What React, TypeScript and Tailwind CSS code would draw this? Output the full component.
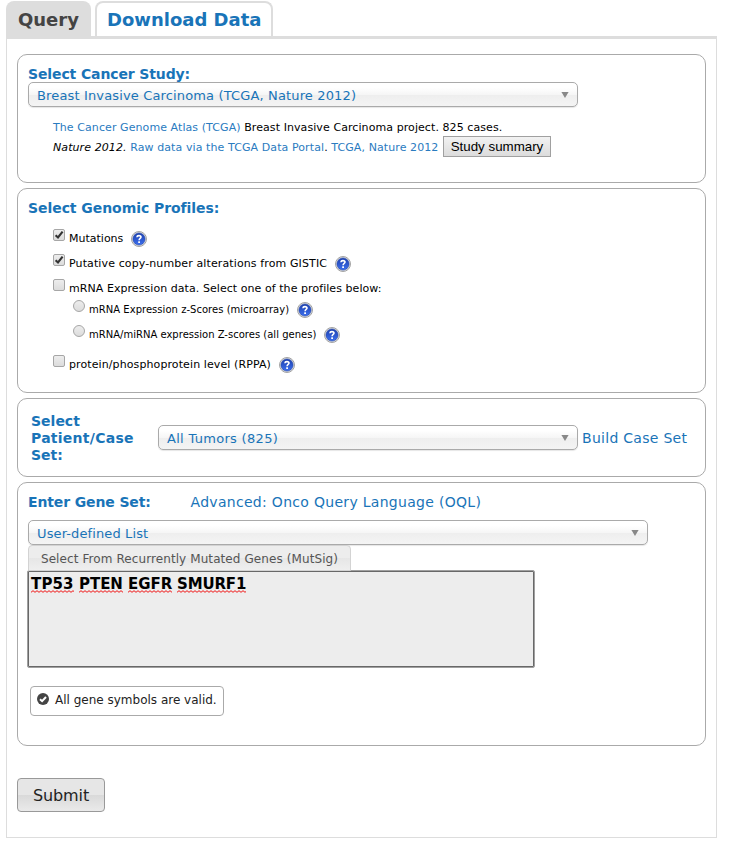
import type { ReactNode } from "react";

function Card({ className, children }: { className: string; children: ReactNode }) {
  return (
    <section className={`w-[689px] rounded-[10px] border border-[#aaa] ${className}`}>{children}</section>
  );
}

function Select({ label, className }: { label: string; className: string }) {
  return (
    <div
      className={`flex h-[25px] shrink-0 items-center justify-between rounded-[5px] border border-[#aaa] bg-[linear-gradient(#fff_20%,#f6f6f6_50%,#eee_52%,#f4f4f4_100%)] pr-[8px] pl-2 text-[13px] leading-[15px] text-[#1974b8] shadow-[0_1px_1px_rgba(0,0,0,0.1)] ${className}`}
    >
      <span className="pt-[2px]">{label}</span>
      <svg width="8" height="6" viewBox="0 0 8 6">
        <path d="M0.4 0h7.2L4 6z" fill="#888" />
      </svg>
    </div>
  );
}

function Help() {
  return (
    <svg width="16" height="16" viewBox="0 0 16 16" className="mt-[2px] ml-2 shrink-0">
      <defs>
        <linearGradient id="help-blue" x1="0" y1="0" x2="0" y2="1">
          <stop offset="0" stopColor="#1c3fae" />
          <stop offset="1" stopColor="#3d70ee" />
        </linearGradient>
      </defs>
      <circle cx="8" cy="8" r="7.5" fill="#e6e6e6" stroke="#a3a3a3" />
      <circle cx="8" cy="8" r="6.1" fill="url(#help-blue)" stroke="#2444a4" strokeWidth="0.6" />
      <path d="M5.9 6.2C6 4.2 10 4.1 10 6.1 10 7.5 8.1 7.4 8.1 9.3" fill="none" stroke="#fff" strokeWidth="1.6" />
      <rect x="7.2" y="10.3" width="1.8" height="1.7" fill="#fff" />
    </svg>
  );
}

function Box({ checked = false, round = false }: { checked?: boolean; round?: boolean }) {
  return (
    <span
      className={`h-3 w-3 shrink-0 border border-[#a6a6a6] bg-linear-to-b from-[#ededed] to-[#dcdcdc] ${round ? "rounded-full" : "rounded-[2px]"}`}
    >
      {checked && (
        <svg width="10" height="10" viewBox="0 0 10 10">
          <path d="M1.6 5.2 4 7.5 8.6 1.6" fill="none" stroke="#333" strokeWidth="2.1" />
        </svg>
      )}
    </span>
  );
}

interface Profile {
  label: string;
  row: string;
  text: string;
  checked?: boolean;
  round?: boolean;
  help?: boolean;
}

const profiles: Profile[] = [
  { label: "Mutations", row: "h-[25px] pl-[35px]", text: "text-[11px]", checked: true, help: true },
  { label: "Putative copy-number alterations from GISTIC", row: "h-[25px] pl-[35px]", text: "text-[11px] tracking-[0.115px]", checked: true, help: true },
  { label: "mRNA Expression data. Select one of the profiles below:", row: "h-[21px] pl-[35px]", text: "text-[11px] tracking-[0.06px]" },
  { label: "mRNA Expression z-Scores (microarray)", row: "h-[25px] pl-[55px]", text: "text-[10px] tracking-[0.03px]", round: true, help: true },
  { label: "mRNA/miRNA expression Z-scores (all genes)", row: "h-[30px] pl-[55px]", text: "text-[10px] tracking-[0.01px]", round: true, help: true },
  { label: "protein/phosphoprotein level (RPPA)", row: "h-[25px] pl-[35px]", text: "text-[11px] tracking-[0.1px]", help: true },
];

const genes = [
  { name: "TP53", className: "w-[48px] tracking-[0.15px]", wave: 43 },
  { name: "PTEN", className: "w-[49px] tracking-[-0.05px]", wave: 44 },
  { name: "EGFR", className: "w-[49px] tracking-[-0.05px]", wave: 44 },
  { name: "SMURF1", className: "w-[70px] tracking-[-0.15px]", wave: 69 },
];

/* Spell-check squiggle under a gene symbol */
function Squiggle({ width }: { width: number }) {
  return (
    <svg width={width} height="3" className="absolute top-[15px] left-0">
      <defs>
        <pattern id="squiggle" width="4" height="3" patternUnits="userSpaceOnUse">
          <path d="M-1 1.5 0 2.3 2 0.7 4 2.3 5 1.5" fill="none" stroke="#f00000" strokeWidth="0.9" />
        </pattern>
      </defs>
      <rect width={width} height="3" fill="url(#squiggle)" />
    </svg>
  );
}

export default function App() {
  return (
    <div className="h-[855px] w-[733px] bg-white pt-px pl-[6px] font-['DejaVu_Sans',sans-serif] whitespace-nowrap text-black">
      <nav className="flex h-[35px] gap-[4px] text-[18px] leading-[22px] font-bold">
        <div className="w-[85px] rounded-t-[8px] bg-[#ddd] pt-[8px] pl-3 text-[#444]">Query</div>
        <div className="w-[178px] rounded-t-[8px] border-2 border-b-0 border-[#ddd] pt-[6px] pl-[10px] text-[#1974b8]">
          Download Data
        </div>
      </nav>
      <main className="h-[802px] w-[711px] border border-t-[3px] border-[#ddd] pt-[15px] pl-[10px]">
        <Card className="h-[129px] pt-[11px] pl-[10px]">
          <h2 className="h-4 text-[14px] leading-4 font-bold tracking-[-0.12px] text-[#1974b8]">Select Cancer Study:</h2>
          <Select label="Breast Invasive Carcinoma (TCGA, Nature 2012)" className="w-[550px] tracking-[0.145px]" />
          <div className="pt-[11px] pl-[25px] text-[11px] leading-[20px] tracking-[0.08px]">
            <p>
              <span className="text-[#2a7bbf]">The Cancer Genome Atlas (TCGA)</span> Breast Invasive Carcinoma project. 825 cases.
            </p>
            <p className="flex h-5 items-start">
              <span className="w-[386px] tracking-[0.09px]">
                <i>Nature 2012.</i> <span className="text-[#2a7bbf]">Raw data via the TCGA Data Portal</span>.{" "}
                <span className="text-[#2a7bbf]">TCGA, Nature 2012</span>
              </span>
              <button className="-mt-[2px] ml-1 h-[21px] w-[108px] border border-[#a0a0a0] bg-linear-to-b from-[#f2f2f2] to-[#dcdcdc] font-['Liberation_Sans',sans-serif] text-[13.33px] leading-[19px] tracking-normal">
                Study summary
              </button>
            </p>
          </div>
        </Card>

        <Card className="mt-[5px] h-[205px] pt-[11px] pl-[10px]">
          <h2 className="h-[29px] text-[14px] leading-4 font-bold tracking-[-0.06px] text-[#1974b8]">
            Select Genomic Profiles:
          </h2>
          <div className="-ml-[10px]">
            {profiles.map((p) => (
              <div key={p.label} className={`flex items-start ${p.row}`}>
                <Box checked={p.checked} round={p.round} />
                <span className={`ml-1 pt-[3px] leading-[14px] ${p.text}`}>{p.label}</span>
                {p.help && <Help />}
              </div>
            ))}
          </div>
        </Card>

        <Card className="mt-[5px] flex h-[79px] items-center pl-[13px]">
          <h2 className="w-[127px] pt-[2px] text-[14px] leading-[17px] font-bold tracking-[0.26px] text-[#1974b8]">
            <span className="tracking-normal">Select</span>
            <br />
            Patient/Case
            <br />
            <span className="tracking-normal">Set:</span>
          </h2>
          <Select label="All Tumors (825)" className="w-[420px] tracking-[0.3px]" />
          <a className="ml-1 pt-[2px] text-[14px] tracking-[0.28px] text-[#1974b8]">Build Case Set</a>
        </Card>

        <Card className="mt-[5px] h-[264px] pt-[11px] pl-[10px]">
          <div className="flex h-[26px] text-[14px] leading-4 text-[#1974b8]">
            <h2 className="w-[162.5px] font-bold tracking-[-0.13px]">Enter Gene Set:</h2>
            <a className="tracking-[0.3px]">Advanced: Onco Query Language (OQL)</a>
          </div>
          <Select label="User-defined List" className="w-[620px] tracking-[0.12px]" />
          <button className="relative z-10 block h-[26px] w-[323px] rounded-t-[4px] border border-[#d3d3d3] bg-[linear-gradient(#ededed_50%,#e6e6e6_50%,#efefef)] pt-px text-[12px] leading-[24px] tracking-[0.09px] text-[#555]">
            Select From Recurrently Mutated Genes (MutSig)
          </button>
          <div className="-mt-px -ml-px flex h-[98px] w-[508px] rounded-[2px] border border-[#a0a0a0] bg-[#ededed] pt-[4px] pl-[3px] text-[15px] leading-[18px] font-bold shadow-[inset_0_0_0_1px_#686868]">
            {genes.map((g) => (
              <span key={g.name} className={`relative ${g.className}`}>
                {g.name}
                <Squiggle width={g.wave} />
              </span>
            ))}
          </div>
          <div className="mt-[18px] ml-[2px] flex h-[30px] w-[194px] rounded-[4px] border border-[#aaa] pt-[6px] pl-[6px] text-[12px] leading-[14px] text-[#222]">
            <svg width="12" height="12" viewBox="0 0 12 12" className="mr-[6px]">
              <circle cx="6" cy="6" r="6" fill="#444" />
              <path d="M3 6.2 5.1 8.2 9 4" fill="none" stroke="#fff" strokeWidth="2" />
            </svg>
            All gene symbols are valid.
          </div>
        </Card>

        <button className="mt-8 block h-[34px] w-[88px] rounded-[4px] border border-[#999] bg-[linear-gradient(#e6e6e6_50%,#d9d9d9_50%,#eaeaea)] pt-px text-[16px] leading-[32px] tracking-[-0.1px] text-[#222]">
          Submit
        </button>
      </main>
    </div>
  );
}
